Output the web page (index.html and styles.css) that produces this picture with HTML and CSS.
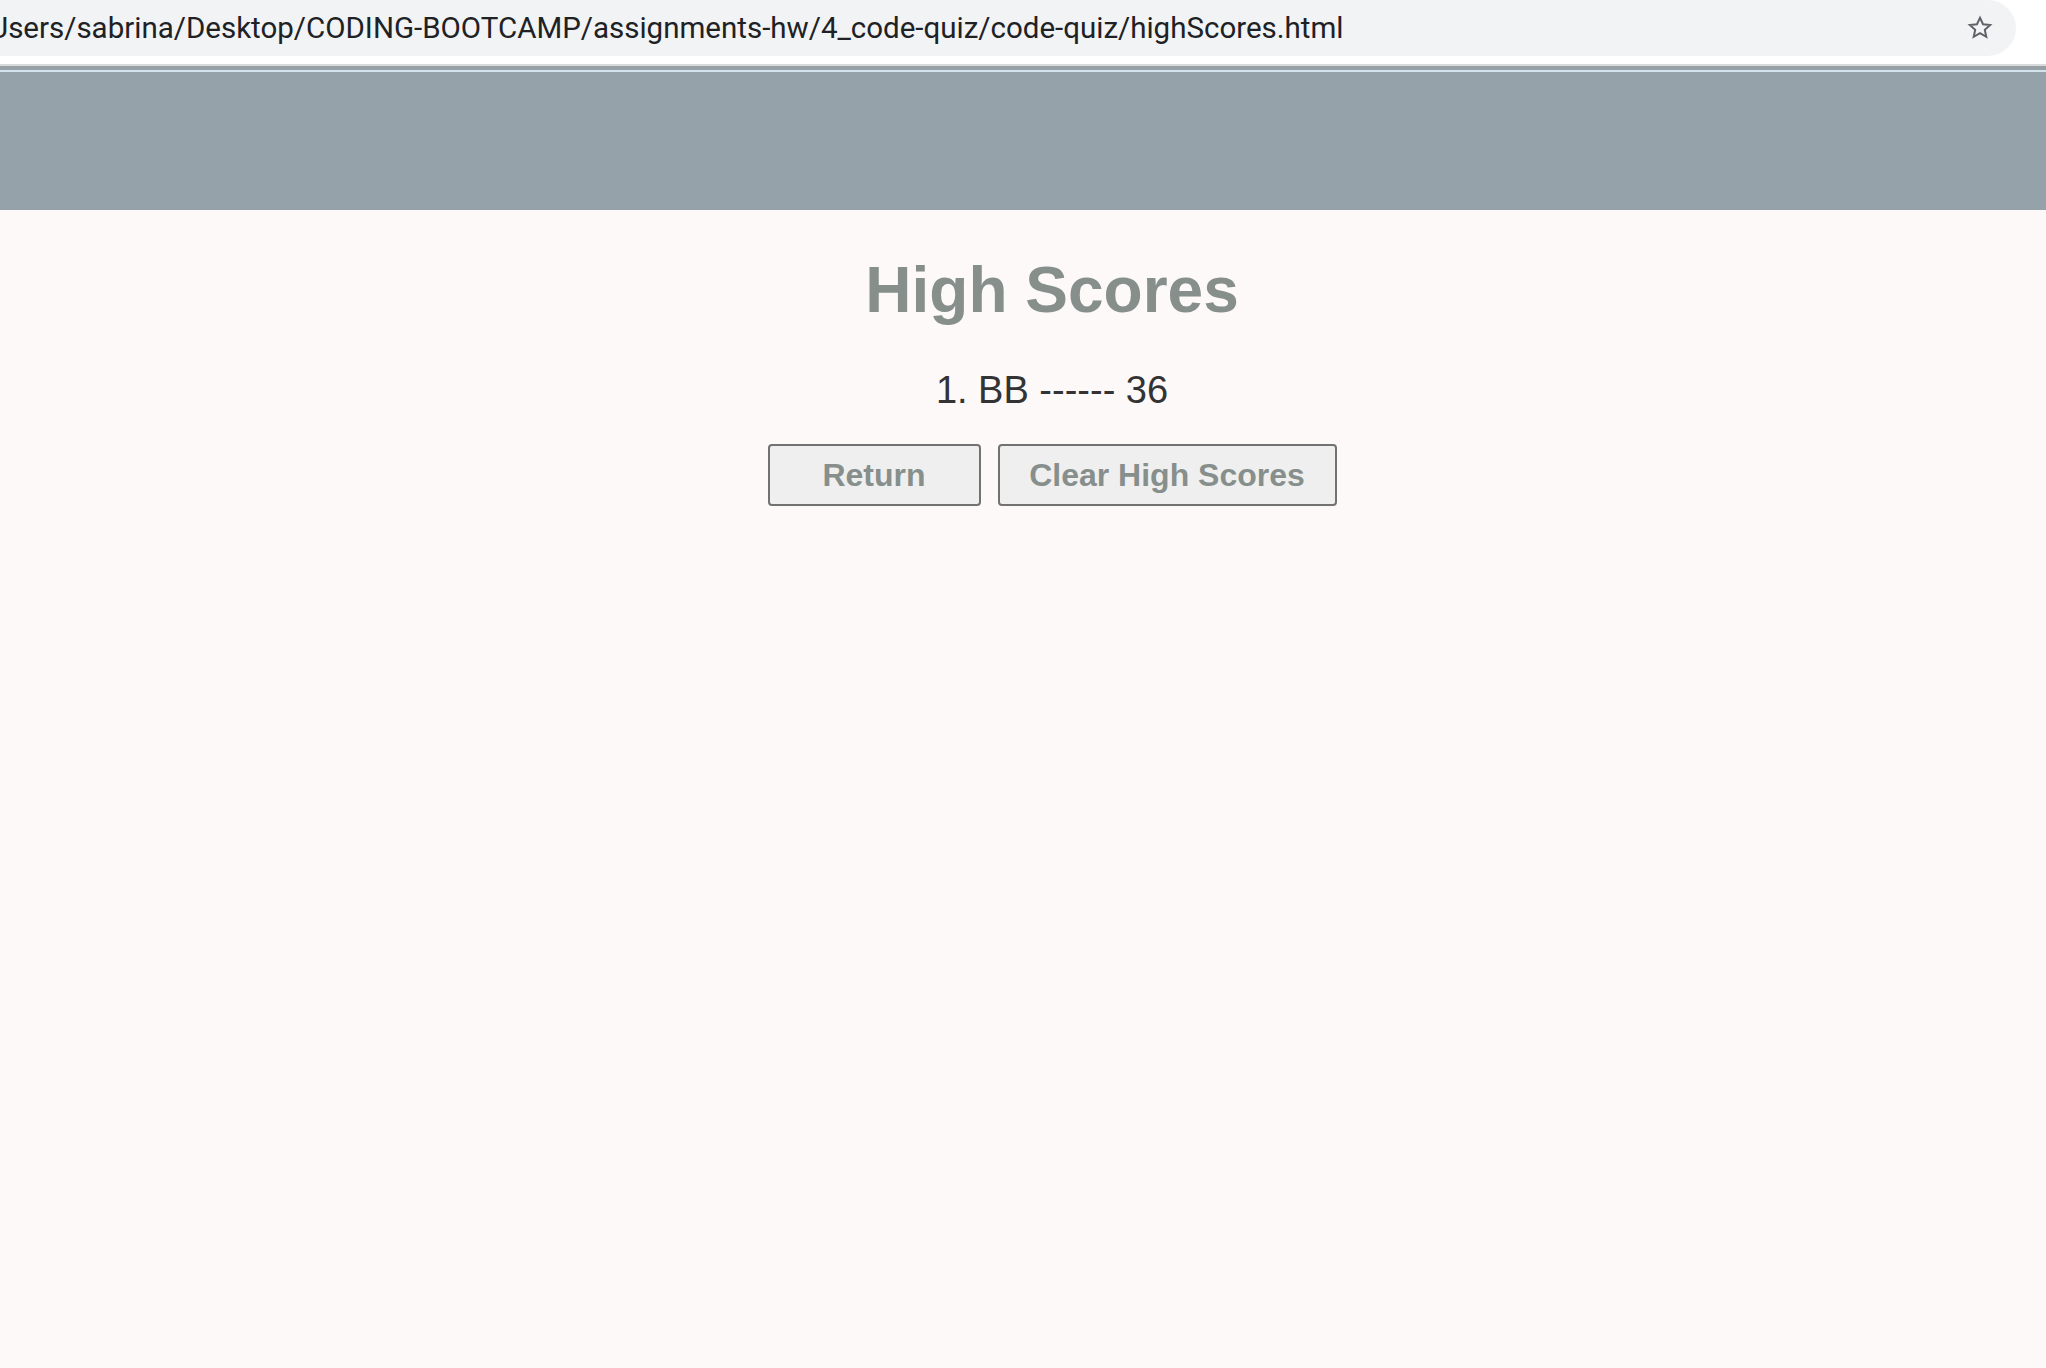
FILE: index.html
```html
<!DOCTYPE html>
<html lang="en">
<head>
<meta charset="utf-8">
<title>High Scores</title>
<link rel="stylesheet" href="styles.css">
</head>
<body>
  <div class="chrome">
    <div class="omnibox">
      <span class="url">Users/sabrina/Desktop/CODING-BOOTCAMP/assignments-hw/4_code-quiz/code-quiz/highScores.html</span>
      <svg class="star" width="28" height="28" viewBox="0 0 24 24" aria-hidden="true">
        <path d="M12 3.2l2.6 5.6 6.1.6-4.6 4.1 1.3 6-5.4-3.1-5.4 3.1 1.3-6-4.6-4.1 6.1-.6z" fill="none" stroke="#5f6368" stroke-width="1.7" stroke-linejoin="miter"/>
      </svg>
    </div>
    <div class="chrome-gap"></div>
    <div class="chrome-line1"></div>
    <div class="chrome-line2"></div>
    <div class="chrome-line3"></div>
  </div>
  <header class="page-header"></header>
  <main class="content">
    <h1 class="title">High Scores</h1>
    <p class="score">1. BB ------ 36</p>
    <div class="actions">
      <button class="btn btn-return" type="button">Return</button>
      <button class="btn btn-clear" type="button">Clear High Scores</button>
    </div>
  </main>
</body>
</html>
```

FILE: styles.css
```css
* { box-sizing: border-box; }

html, body {
  margin: 0;
  padding: 0;
}

body {
  background: #fdf9f8;
  font-family: "Liberation Sans", Arial, sans-serif;
  width: 2046px;
  height: 1368px;
  overflow: hidden;
}

.chrome {
  background: #ffffff;
}

.omnibox {
  width: 2016px;
  height: 56px;
  background: #f1f3f4;
  border-radius: 0 28px 28px 0;
  display: flex;
  align-items: center;
  justify-content: space-between;
  overflow: hidden;
  padding-right: 22px;
}

.url {
  font-family: Roboto, "Noto Sans", sans-serif;
  font-size: 29.5px;
  color: #202124;
  margin-left: -11px;
  white-space: nowrap;
}

.star {
  display: block;
}

.chrome-gap { height: 8px; background: #ffffff; }
.chrome-line1 { height: 2px; background: #d8dadc; }
.chrome-line2 { height: 4px; background: #97a0a4; }
.chrome-line3 { height: 2px; background: #d3e3ed; }

.page-header {
  height: 138px;
  background: #96a2aa;
}

.content {
  padding-left: 58px;
  text-align: center;
}

.title {
  margin: 43px 0 0;
  font-size: 64px;
  line-height: 74px;
  font-weight: bold;
  color: #878f8d;
}

.score {
  margin: 41px 0 0;
  font-size: 38px;
  line-height: 44px;
  color: #333333;
}

.actions {
  margin-top: 32px;
  display: flex;
  justify-content: center;
  gap: 17px;
}

.btn {
  height: 62px;
  padding: 0;
  border: 2px solid #727272;
  border-radius: 4px;
  background: #efefef;
  font-family: "Liberation Sans", Arial, sans-serif;
  font-size: 32px;
  line-height: 58px;
  font-weight: bold;
  color: #878f8d;
  text-align: center;
}

.btn-return { width: 213px; }
.btn-clear { width: 339px; }
```
